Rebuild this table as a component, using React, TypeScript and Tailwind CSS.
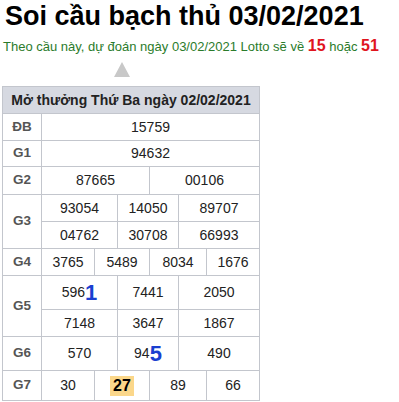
const font = { fontFamily: '"Liberation Sans", Arial, sans-serif' };

function Cell({ children, className = '' }: { children?: React.ReactNode; className?: string }) {
  return <div className={`bg-white flex items-center justify-center text-[14px] text-[#222] ${className}`}>{children}</div>;
}

function Label({ children, className = '' }: { children: React.ReactNode; className?: string }) {
  return <div className={`bg-white flex items-center justify-center text-[13.5px] font-bold text-[#555] ${className}`}>{children}</div>;
}

function Big({ children }: { children: React.ReactNode }) {
  return <span className="text-[22px] font-bold text-[#1a3fd0] leading-none">{children}</span>;
}

export default function App() {
  return (
    <div className="w-[399px] h-[402px] bg-white overflow-hidden" style={font}>
      <h1 className="pl-[5px] pt-[1px] text-[27px] font-bold text-black leading-[30px]">Soi cầu bạch thủ 03/02/2021</h1>
      <p className="pl-[3px] mt-[5px] text-[13px] text-[#2b7b2b] leading-[20px]">
        Theo cầu này, dự đoán ngày 03/02/2021 Lotto sẽ về <b className="text-[16px] text-[#e0141e]">15</b> hoặc{' '}
        <b className="text-[16px] text-[#e0141e]">51</b>
      </p>
      <div className="ml-[114px] mt-[5px] w-0 h-0 border-l-[8px] border-r-[8px] border-b-[15px] border-l-transparent border-r-transparent border-b-[#c8c8c8]" />
      <div className="ml-[2px] mt-[9px] w-[258px] grid gap-px bg-[#c3c6cd] p-px grid-cols-[38px_52px_22px_31px_28px_27px_52px] grid-rows-[26px_26px_25px_27px_26px_26px_26px_33px_26px_33px_29px]">
        <div className="col-span-7 bg-[#d6d9e1] flex items-center justify-center text-[14px] font-bold text-[#222]">
          Mở thưởng Thứ Ba ngày 02/02/2021
        </div>

        <Label>ĐB</Label>
        <Cell className="col-span-6">15759</Cell>

        <Label>G1</Label>
        <Cell className="col-span-6">94632</Cell>

        <Label>G2</Label>
        <Cell className="col-span-3">87665</Cell>
        <Cell className="col-span-3">00106</Cell>

        <Label className="row-span-2">G3</Label>
        <Cell className="col-span-2">93054</Cell>
        <Cell className="col-span-2">14050</Cell>
        <Cell className="col-span-2">89707</Cell>
        <Cell className="col-span-2">04762</Cell>
        <Cell className="col-span-2">30708</Cell>
        <Cell className="col-span-2">66993</Cell>

        <Label>G4</Label>
        <Cell>3765</Cell>
        <Cell className="col-span-2">5489</Cell>
        <Cell className="col-span-2">8034</Cell>
        <Cell>1676</Cell>

        <Label className="row-span-2">G5</Label>
        <Cell className="col-span-2">
          596<Big>1</Big>
        </Cell>
        <Cell className="col-span-2">7441</Cell>
        <Cell className="col-span-2">2050</Cell>
        <Cell className="col-span-2">7148</Cell>
        <Cell className="col-span-2">3647</Cell>
        <Cell className="col-span-2">1867</Cell>

        <Label>G6</Label>
        <Cell className="col-span-2">570</Cell>
        <Cell className="col-span-2">
          94<Big>5</Big>
        </Cell>
        <Cell className="col-span-2">490</Cell>

        <Label>G7</Label>
        <Cell>30</Cell>
        <Cell className="col-span-2">
          <span className="bg-[#fbd78a] px-[3px] h-[20px] flex items-center text-[16px] font-bold text-black">27</span>
        </Cell>
        <Cell className="col-span-2">89</Cell>
        <Cell>66</Cell>
      </div>
    </div>
  );
}
